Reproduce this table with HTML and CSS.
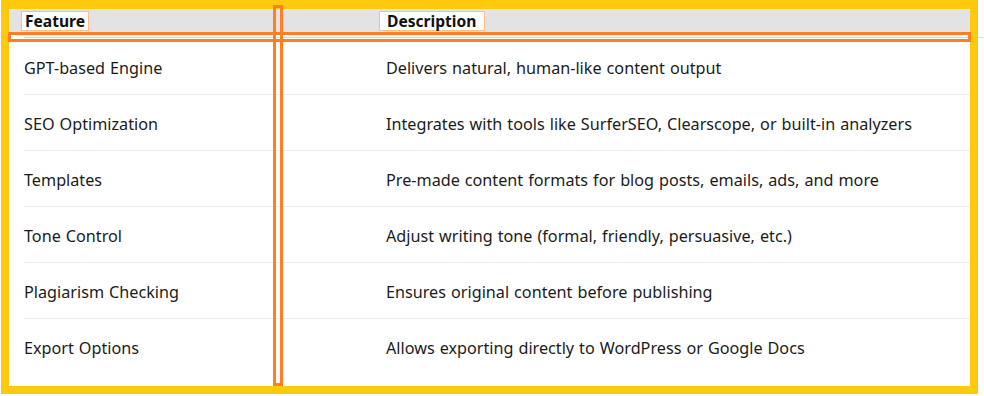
FILE: index.html
```html
<!DOCTYPE html>
<html lang="en">
<head>
<meta charset="utf-8">
<title>Features</title>
<link rel="stylesheet" href="styles.css">
</head>
<body>
<div class="page">
  <div class="thead">
    <div class="th"><span class="label label-feature">Feature</span></div>
    <div class="th"><span class="label label-desc">Description</span></div>
  </div>
  <div class="thead-rule"></div>
  <div class="tbody">
    <div class="row"><div class="cell">GPT-based Engine</div><div class="cell">Delivers natural, human-like content output</div></div>
    <div class="row"><div class="cell">SEO Optimization</div><div class="cell">Integrates with tools like SurferSEO, Clearscope, or built-in analyzers</div></div>
    <div class="row"><div class="cell">Templates</div><div class="cell">Pre-made content formats for blog posts, emails, ads, and more</div></div>
    <div class="row"><div class="cell">Tone Control</div><div class="cell">Adjust writing tone (formal, friendly, persuasive, etc.)</div></div>
    <div class="row"><div class="cell">Plagiarism Checking</div><div class="cell">Ensures original content before publishing</div></div>
    <div class="row row-last"><div class="cell">Export Options</div><div class="cell">Allows exporting directly to WordPress or Google Docs</div></div>
  </div>
  <div class="hl-frame"></div>
  <div class="hl-row"></div>
  <div class="hl-col"></div>
</div>
</body>
</html>
```
FILE: styles.css
```css
html, body {
  margin: 0;
  padding: 0;
  background: #ffffff;
}
body {
  font-family: "Noto Sans", "Open Sans", sans-serif;
  font-size: 16.2px;
  word-spacing: 0.8px;
  color: #1b1b1b;
  width: 984px;
  height: 396px;
  overflow: hidden;
}
.page {
  position: relative;
  padding-top: 2px;
  height: 394px;
}
.thead {
  margin: 0 8px;
  height: 30px;
  background: #e3e3e3;
  display: grid;
  grid-template-columns: 358px 1fr;
  padding-left: 13px;
  box-sizing: border-box;
}
.th {
  padding-top: 8px;
}
.label {
  display: inline-block;
  height: 20px;
  line-height: 18px;
  box-sizing: border-box;
  background: #ffffff;
  border: 1px solid #fbc08a;
  font-size: 15.6px;
  font-weight: 700;
  color: #111111;
  white-space: nowrap;
}
.label-feature {
  width: 68px;
  padding-left: 3px;
}
.label-desc {
  width: 106px;
  padding-left: 7px;
}
.thead-rule {
  margin: 5px 0 1px 24px;
  border-top: 1px solid #d9d9d9;
}
.row {
  margin: 0 8px 0 24px;
  height: 56px;
  box-sizing: border-box;
  display: grid;
  grid-template-columns: 362px 1fr;
  align-items: center;
  border-bottom: 1px solid #efefef;
  padding-top: 2px;
}
.row-last {
  border-bottom: none;
}
.hl-frame {
  position: absolute;
  left: 1px;
  top: 0;
  width: 977px;
  height: 394px;
  box-sizing: border-box;
  border-style: solid;
  border-color: #ffc90e;
  border-width: 9px 8px 8px 8px;
}
.hl-row {
  position: absolute;
  left: 8px;
  top: 32px;
  width: 963px;
  height: 10px;
  box-sizing: border-box;
  border: 3px solid #ff7f27;
}
.hl-col {
  position: absolute;
  left: 273px;
  top: 5px;
  width: 10px;
  height: 381px;
  box-sizing: border-box;
  border: 3px solid #ff7f27;
}
```
